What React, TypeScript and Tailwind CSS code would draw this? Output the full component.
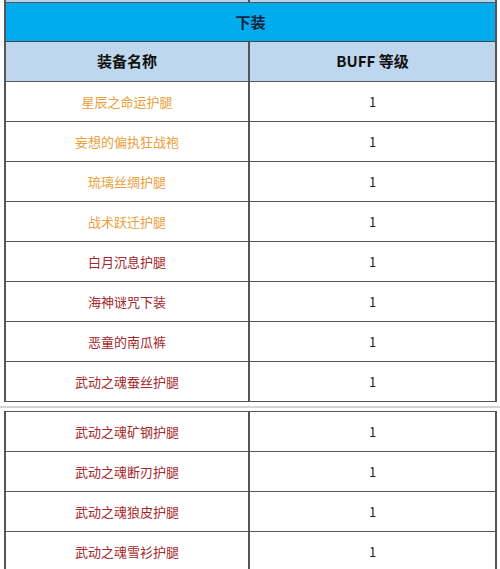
const topRows: { name: string; tone: 'gold' | 'red' }[] = [
  { name: '星辰之命运护腿', tone: 'gold' },
  { name: '妄想的偏执狂战袍', tone: 'gold' },
  { name: '琉璃丝绸护腿', tone: 'gold' },
  { name: '战术跃迁护腿', tone: 'gold' },
  { name: '白月沉息护腿', tone: 'red' },
  { name: '海神谜咒下装', tone: 'red' },
  { name: '恶童的南瓜裤', tone: 'red' },
  { name: '武动之魂蚕丝护腿', tone: 'red' },
];

const bottomRows = ['武动之魂矿钢护腿', '武动之魂断刃护腿', '武动之魂狼皮护腿', '武动之魂雪衫护腿'];

function Row({ name, tone }: { name: string; tone: 'gold' | 'red' }) {
  return (
    <div className="grid grid-cols-[244px_1fr] h-[40px] border-b border-[#555]">
      <div
        className={
          'flex items-center justify-center border-r-2 border-[#555] text-[13px] ' +
          (tone === 'gold' ? 'text-[#e9a03a]' : 'text-[#a3282b]')
        }
      >
        {name}
      </div>
      <div className="flex items-center justify-center text-[13px] text-[#222]">1</div>
    </div>
  );
}

export default function App() {
  return (
    <div
      className="w-[500px] h-[569px] overflow-hidden bg-white"
      style={{ fontFamily: '"Noto Sans CJK SC", "Microsoft YaHei", sans-serif' }}
    >
      {/* tail of previous table */}
      <div className="ml-[4px] w-[493px] h-[2px] grid grid-cols-[244px_1fr] border-x-2 border-[#555] bg-[#b9d3ea]">
        <div className="border-r-2 border-[#555]" />
        <div />
      </div>

      {/* main table */}
      <div className="ml-[4px] w-[493px] border-x-2 border-t border-[#555]">
        <div className="h-[39px] flex items-center justify-center bg-[#00acee] border-b border-[#444] text-[15px] font-bold text-[#14233a]">
          下装
        </div>
        <div className="grid grid-cols-[244px_1fr] h-[40px] bg-[#bed6ee] border-b border-[#555] text-[15px] font-bold text-[#111]">
          <div className="flex items-center justify-center border-r-2 border-[#555]">装备名称</div>
          <div className="flex items-center justify-center">BUFF 等级</div>
        </div>
        {topRows.map(r => (
          <Row key={r.name} name={r.name} tone={r.tone} />
        ))}
      </div>

      {/* page break gap */}
      <div className="h-[9px] flex flex-col justify-center">
        <div className="h-[2px] bg-[#d4d4d4]" />
      </div>

      <div className="ml-[4px] w-[493px] border-x-2 border-t border-[#555]">
        {bottomRows.map(n => (
          <Row key={n} name={n} tone="red" />
        ))}
      </div>
    </div>
  );
}
